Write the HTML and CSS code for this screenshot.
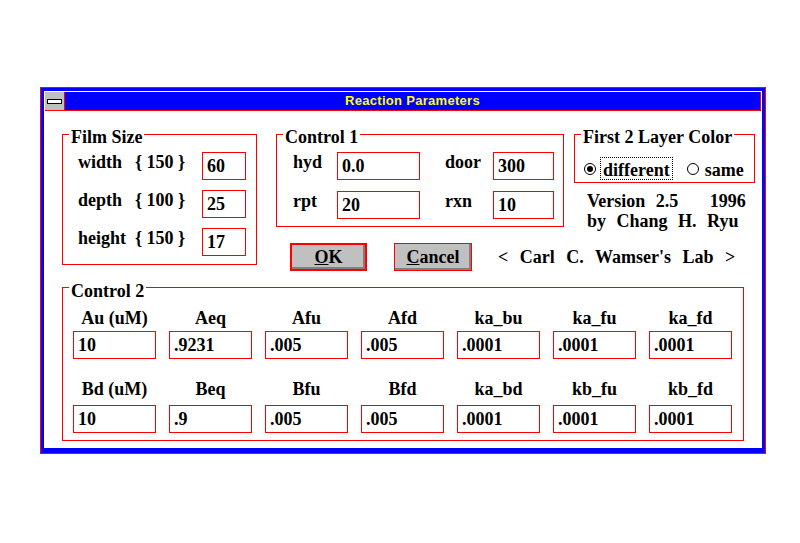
FILE: index.html
```html
<!DOCTYPE html>
<html lang="en">
<head>
  <meta charset="UTF-8" />
  <title>Reaction Parameters</title>
  <link rel="stylesheet" href="styles.css">
</head>
<body>
  <div class="window">
    <div class="client">
      <div class="titlebar">
        <div class="sysmenu"><span class="sysbar"></span></div>
        <div class="caption">Reaction Parameters</div>
      </div>

      <div class="dialog">
        <div class="top">
          <div class="group film">
            <div class="group-title">Film Size</div>
            <div class="film-grid">
              <span>width</span><span>{ 150 }</span><input class="field" value="60">
              <span>depth</span><span>{ 100 }</span><input class="field" value="25">
              <span>height</span><span>{ 150 }</span><input class="field" value="17">
            </div>
          </div>

          <div class="right-area">
            <div class="row1">
              <div class="group control1">
                <div class="group-title">Control 1</div>
                <div class="c1-grid">
                  <span>hyd</span><input class="field" value="0.0">
                  <span class="pad">door</span><input class="field" value="300">
                  <span>rpt</span><input class="field" value="20">
                  <span class="pad">rxn</span><input class="field" value="10">
                </div>
              </div>

              <div class="info">
                <div class="group layer">
                  <div class="group-title">First 2 Layer Color</div>
                  <div class="radios">
                    <span class="radio on"></span><span class="focus">different</span>
                    <span class="radio second"></span><span class="radio-label">same</span>
                  </div>
                </div>
                <div class="version">Version 2.5   1996
by Chang H. Ryu</div>
              </div>
            </div>

            <div class="row2">
              <button class="btn default"><u>O</u>K</button>
              <button class="btn cancel"><u>C</u>ancel</button>
              <div class="lab">&lt; Carl C. Wamser's Lab &gt;</div>
            </div>
          </div>
        </div>

        <div class="group control2">
          <div class="group-title">Control 2</div>
          <div class="c2-grid">
            <span>Au (uM)</span><span>Aeq</span><span>Afu</span><span>Afd</span>
            <span>ka_bu</span><span>ka_fu</span><span>ka_fd</span>
            <input class="field" value="10"><input class="field" value=".9231">
            <input class="field" value=".005"><input class="field" value=".005">
            <input class="field" value=".0001"><input class="field" value=".0001">
            <input class="field" value=".0001">
          </div>
          <div class="c2-grid second">
            <span>Bd (uM)</span><span>Beq</span><span>Bfu</span><span>Bfd</span>
            <span>ka_bd</span><span>kb_fu</span><span>kb_fd</span>
            <input class="field" value="10"><input class="field" value=".9">
            <input class="field" value=".005"><input class="field" value=".005">
            <input class="field" value=".0001"><input class="field" value=".0001">
            <input class="field" value=".0001">
          </div>
        </div>
      </div>
    </div>
  </div>
</body>
</html>
```

FILE: styles.css
```css
body {
  margin: 0;
  background: #fff;
  color: #000;
  font-family: "Liberation Serif", "Times New Roman", serif;
  font-weight: bold;
  font-size: 18px;
}

.window {
  margin: 87px 0 0 40px;
  width: 726px;
  height: 367px;
  box-sizing: border-box;
  border: 1px solid #f00;
  background: #00f;
  padding: 3px 3px 5px;
}

.client {
  height: 100%;
  box-sizing: border-box;
  padding: 1px;
  background: #fff;
}

.titlebar {
  display: flex;
  height: 19px;
  box-sizing: border-box;
  background: #00f;
  border-bottom: 1px solid #f00;
  border-right: 1px solid #f00;
}

.sysmenu {
  width: 19px;
  background: #c0c0c0;
  border-right: 1px solid #f00;
  display: flex;
  align-items: center;
  justify-content: center;
}

.sysbar {
  width: 15px;
  height: 5px;
  box-sizing: border-box;
  border: 1px solid #000;
  background: #fff;
}

.caption {
  flex: 1;
  text-align: center;
  color: #ff0;
  font-family: "Liberation Sans", Arial, sans-serif;
  font-size: 13px;
  line-height: 18px;
  letter-spacing: 0.3px;
}

.dialog {
  padding: 23px 0 0 17px;
}

.top {
  display: flex;
  align-items: flex-start;
}

.group {
  border: 1px solid #f00;
  box-sizing: border-box;
}

.group-title {
  width: fit-content;
  margin: -8px 0 0 6px;
  padding: 0 2px;
  background: #fff;
  line-height: 20px;
}

.field {
  width: 100%;
  height: 28px;
  box-sizing: border-box;
  border: 1px solid #f00;
  padding: 0 4px;
  margin: 0;
  background: #fff;
  color: #000;
  font: inherit;
  text-align: left;
  outline: none;
}

/* film size */
.film {
  width: 195px;
  height: 131px;
}

.film-grid {
  display: grid;
  grid-template-columns: 57px 67px 44px;
  grid-auto-rows: 28px;
  row-gap: 10px;
  margin: 5px 0 0 15px;
  line-height: 20px;
}

/* control 1 + color */
.right-area {
  margin-left: 19px;
}

.row1 {
  display: flex;
  align-items: flex-start;
}

.control1 {
  width: 288px;
  height: 93px;
}

.c1-grid {
  display: grid;
  grid-template-columns: 44px 83px 73px 61px;
  grid-auto-rows: 28px;
  row-gap: 11px;
  margin: 5px 0 0 16px;
  line-height: 20px;
}

.c1-grid .pad { padding-left: 25px; }

.info {
  margin-left: 10px;
}

.layer {
  width: 181px;
  height: 49px;
}

.radios {
  display: flex;
  align-items: center;
  margin: 10px 0 0 9px;
  line-height: 18px;
}

.radio {
  width: 12px;
  height: 12px;
  box-sizing: border-box;
  border: 1px solid #000;
  border-radius: 50%;
  display: flex;
  align-items: center;
  justify-content: center;
}

.radio.on::after {
  content: "";
  width: 6px;
  height: 6px;
  border-radius: 50%;
  background: #000;
}

.radio.second { margin-left: 14px; }

.focus {
  margin-left: 4px;
  padding: 3px 2px 0;
  border: 1px dotted #000;
}

.radio-label {
  margin-left: 6px;
  padding-top: 3px;
}

.version {
  margin: 8px 0 0 13px;
  line-height: 20px;
  white-space: pre;
  word-spacing: 6px;
}

/* buttons */
.row2 {
  display: flex;
  align-items: center;
  margin-top: 12px;
  padding-left: 14px;
}

.btn {
  width: 77px;
  height: 28px;
  padding: 0;
  background: #c0c0c0;
  border: 1px solid #f00;
  box-shadow: inset -2px -2px 0 #808080;
  color: #000;
  font: inherit;
}

.btn.default { border-width: 2px; }

.btn.cancel {
  width: 78px;
  margin-left: 27px;
}

.lab {
  margin-left: 26px;
  word-spacing: 7px;
}

/* control 2 */
.control2 {
  width: 682px;
  height: 154px;
  margin-top: 16px;
}

.control2 .group-title { margin-top: -7px; }

.c2-grid {
  display: grid;
  grid-template-columns: repeat(7, 83px);
  grid-template-rows: 20px 28px;
  column-gap: 13px;
  row-gap: 3px;
  margin: 7px 0 0 10px;
  line-height: 20px;
  text-align: center;
}

.c2-grid.second {
  margin-top: 20px;
  row-gap: 6px;
}
```
